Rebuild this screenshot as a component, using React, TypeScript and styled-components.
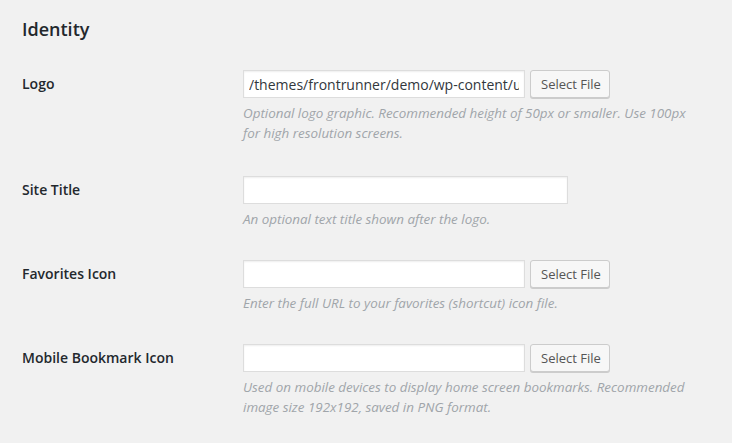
import { createGlobalStyle } from 'styled-components'
import styled from 'styled-components'

const GlobalStyle = createGlobalStyle`
  html, body {
    margin: 0;
    padding: 0;
    background: #f1f1f1;
  }
  body {
    font-family: 'Open Sans', 'Noto Sans', sans-serif;
    color: #23282d;
  }
`

type Field = {
  label: string
  value?: string
  inputWidth: number
  withButton?: boolean
  description: string
}

const fields: Field[] = [
  {
    label: 'Logo',
    value: '/themes/frontrunner/demo/wp-content/uploads/2016/logo.png',
    inputWidth: 282,
    withButton: true,
    description:
      'Optional logo graphic. Recommended height of 50px or smaller. Use 100px for high resolution screens.',
  },
  {
    label: 'Site Title',
    inputWidth: 325,
    description: 'An optional text title shown after the logo.',
  },
  {
    label: 'Favorites Icon',
    inputWidth: 282,
    withButton: true,
    description: 'Enter the full URL to your favorites (shortcut) icon file.',
  },
  {
    label: 'Mobile Bookmark Icon',
    inputWidth: 282,
    withButton: true,
    description:
      'Used on mobile devices to display home screen bookmarks. Recommended image size 192x192, saved in PNG format.',
  },
]

const App = () => {
  return (
    <>
      <GlobalStyle />
      <Wrap>
        <Heading>Identity</Heading>
        <FormTable>
          {fields.map((field) => (
            <Row key={field.label}>
              <Label>{field.label}</Label>
              <Cell>
                <Controls>
                  <TextInput
                    type="text"
                    $width={field.inputWidth}
                    defaultValue={field.value ?? ''}
                    readOnly
                  />
                  {field.withButton && <Button type="button">Select File</Button>}
                </Controls>
                <Description>{field.description}</Description>
              </Cell>
            </Row>
          ))}
        </FormTable>
      </Wrap>
    </>
  )
}
export default App

const Wrap = styled.div`
  padding: 18px 22px 0 22px;
  width: 732px;
  height: 443px;
  box-sizing: border-box;
  overflow: hidden;
`

const Heading = styled.h2`
  margin: 0;
  font-size: 18px;
  font-weight: 600;
  line-height: 23.4px;
  color: #23282d;
`

const FormTable = styled.div`
  margin-top: 12.6px;
  display: flex;
  flex-direction: column;
`

const Row = styled.div`
  display: grid;
  grid-template-columns: 221px 467px;
  padding: 16px 0 15px;

  &:first-child {
    padding-bottom: 17px;
  }
`

const Label = styled.div`
  padding-top: 5px;
  font-size: 14px;
  font-weight: 600;
  line-height: 18.2px;
  color: #23282d;
`

const Cell = styled.div`
  display: flex;
  flex-direction: column;
`

const Controls = styled.div`
  display: flex;
  align-items: center;
  gap: 5px;
  height: 28px;
`

const TextInput = styled.input<{ $width: number }>`
  box-sizing: border-box;
  width: ${({ $width }) => $width}px;
  height: 28px;
  margin: 0;
  padding: 0 5px;
  border: 1px solid #ddd;
  background: #fff;
  box-shadow: inset 0 1px 2px rgba(0, 0, 0, 0.07);
  font-family: 'Open Sans', 'Noto Sans', sans-serif;
  font-size: 14px;
  color: #32373c;
  outline: none;
`

const Button = styled.button`
  box-sizing: border-box;
  height: 28px;
  width: 80px;
  margin: 0;
  padding: 0 10px 1px;
  border: 1px solid #ccc;
  border-radius: 3px;
  background: #f7f7f7;
  box-shadow: 0 1px 0 #ccc;
  font-family: 'Open Sans', 'Noto Sans', sans-serif;
  font-size: 13px;
  line-height: 26px;
  color: #555;
  white-space: nowrap;
  cursor: pointer;
`

const Description = styled.p`
  max-width: 462px;
  margin: 5px 0 0;
  font-size: 13.4px;
  font-style: italic;
  line-height: 20px;
  color: #a0a5aa;
`
